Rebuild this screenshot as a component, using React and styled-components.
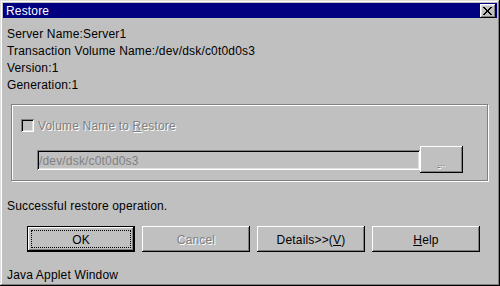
import React from "react";
import styled, { createGlobalStyle, css } from "styled-components";

const Global = createGlobalStyle`
  html, body { margin: 0; padding: 0; background: #c0c0c0; }
  * { box-sizing: border-box; }
  body { font-family: "Liberation Sans", Arial, sans-serif; font-size: 12px; letter-spacing: 0.17px; }
`;

const raised = css`
  box-shadow: inset -1px -1px 0 #000, inset 1px 1px 0 #fff,
    inset -2px -2px 0 #808080, inset 2px 2px 0 #dfdfdf;
`;

const Window = styled.div`
  width: 500px;
  height: 286px;
  padding: 3px;
  background: #c0c0c0;
  box-shadow: inset -1px -1px 0 #000, inset 1px 1px 0 #dfdfdf,
    inset -2px -2px 0 #808080, inset 2px 2px 0 #fff;
  display: flex;
  flex-direction: column;
  overflow: hidden;
  color: #000;
`;

const TitleBar = styled.div`
  height: 18px;
  background: #000080;
  color: #fff;
  display: flex;
  align-items: center;
  justify-content: space-between;
  padding: 1px 1px 0 3px;
  font-size: 12px;
`;

const CloseButton = styled.div`
  width: 16px;
  height: 14px;
  background: #c0c0c0;
  ${raised};
  display: flex;
  align-items: center;
  justify-content: center;
  padding: 0 1px 1px 0;
`;

const Body = styled.div`
  display: flex;
  flex-direction: column;
  padding: 0 4px;
`;

const Info = styled.div`
  margin-top: 8px;
  line-height: 17px;
`;

const Line = styled.div`
  height: 17px;
  white-space: nowrap;
`;

const Group = styled.div`
  margin: 10px 0 0 4px;
  width: 477px;
  height: 77px;
  border: 1px solid #808080;
  box-shadow: inset 1px 1px 0 #fff, 1px 1px 0 #fff;
  padding: 14px 0 0 9px;
  display: flex;
  flex-direction: column;
`;

const CheckRow = styled.div`
  display: flex;
  align-items: center;
  height: 13px;
  gap: 4px;
`;

const CheckBox = styled.div`
  width: 13px;
  height: 13px;
  background: #c0c0c0;
  box-shadow: inset 1px 1px 0 #808080, inset -1px -1px 0 #fff,
    inset 2px 2px 0 #000, inset -2px -2px 0 #dfdfdf;
`;

const Disabled = styled.span`
  color: #808080;
  text-shadow: 1px 1px 0 #fff;
  white-space: nowrap;
`;

const U = styled.span`
  text-decoration: underline;
`;

const FieldRow = styled.div`
  display: flex;
  align-items: center;
  margin: 14px 0 0 16px;
  height: 27px;
`;

const TextField = styled.div`
  width: 383px;
  height: 20px;
  background: #c0c0c0;
  color: #808080;
  box-shadow: inset 1px 1px 0 #808080, inset -1px -1px 0 #fff,
    inset 2px 2px 0 #000, inset -2px -2px 0 #dfdfdf;
  padding: 3px 0 0 2px;
  line-height: 16px;
`;

const SmallButton = styled.div`
  width: 43px;
  height: 27px;
  background: #c0c0c0;
  box-shadow: inset -1px -1px 0 #000, inset 1px 1px 0 #fff,
    inset -2px -2px 0 #808080;
  display: flex;
  align-items: center;
  justify-content: center;
  padding-top: 6px;
  font-size: 9px;
`;

const Message = styled.div`
  margin-top: 17px;
  height: 17px;
  line-height: 17px;
`;

const ButtonRow = styled.div`
  display: flex;
  gap: 7px;
  margin-top: 11px;
  padding-left: 20px;
`;

const Button = styled.div`
  position: relative;
  width: 108px;
  height: 26px;
  background: #c0c0c0;
  display: flex;
  align-items: center;
  justify-content: center;
  padding-top: 1px;
  ${({ $default }) =>
    $default
      ? css`
          box-shadow: inset 0 0 0 1px #000, inset -2px -2px 0 #000,
            inset 2px 2px 0 #fff, inset -3px -3px 0 #808080;
        `
      : css`
          box-shadow: inset -1px -1px 0 #000, inset 1px 1px 0 #fff,
            inset -2px -2px 0 #808080;
        `}
`;

const Focus = styled.div`
  position: absolute;
  inset: 4px 4px 4px 4px;
  border: 1px dotted #000;
`;

const Status = styled.div`
  margin-top: 15px;
  height: 17px;
  line-height: 17px;
`;

const CloseX = () => (
  <svg width="9" height="8" viewBox="0 0 9 8" shapeRendering="crispEdges">
    <path
      d="M0 0h2v1H0zM7 0h2v1H7zM1 1h2v1H1zM6 1h2v1H6zM2 2h2v1H2zM5 2h2v1H5zM3 3h3v1H3zM3 4h3v1H3zM2 5h2v1H2zM5 5h2v1H5zM1 6h2v1H1zM6 6h2v1H6zM0 7h2v1H0zM7 7h2v1H7z"
      fill="#000"
    />
  </svg>
);

export default function App() {
  return (
    <>
      <Global />
      <Window>
        <TitleBar>
          <span>Restore</span>
          <CloseButton>
            <CloseX />
          </CloseButton>
        </TitleBar>
        <Body>
          <Info>
            <Line>Server Name:Server1</Line>
            <Line>Transaction Volume Name:/dev/dsk/c0t0d0s3</Line>
            <Line>Version:1</Line>
            <Line>Generation:1</Line>
          </Info>
          <Group>
            <CheckRow>
              <CheckBox />
              <Disabled>
                Volume Name to <U>R</U>estore
              </Disabled>
            </CheckRow>
            <FieldRow>
              <TextField>/dev/dsk/c0t0d0s3</TextField>
              <SmallButton>
                <Disabled>
                  <U>.</U>..
                </Disabled>
              </SmallButton>
            </FieldRow>
          </Group>
          <Message>Successful restore operation.</Message>
          <ButtonRow>
            <Button $default>
              <Focus />
              OK
            </Button>
            <Button>
              <Disabled>Cancel</Disabled>
            </Button>
            <Button>
              Details&gt;&gt;(<U>V</U>)
            </Button>
            <Button>
              <span>
                <U>H</U>elp
              </span>
            </Button>
          </ButtonRow>
          <Status>Java Applet Window</Status>
        </Body>
      </Window>
    </>
  );
}
